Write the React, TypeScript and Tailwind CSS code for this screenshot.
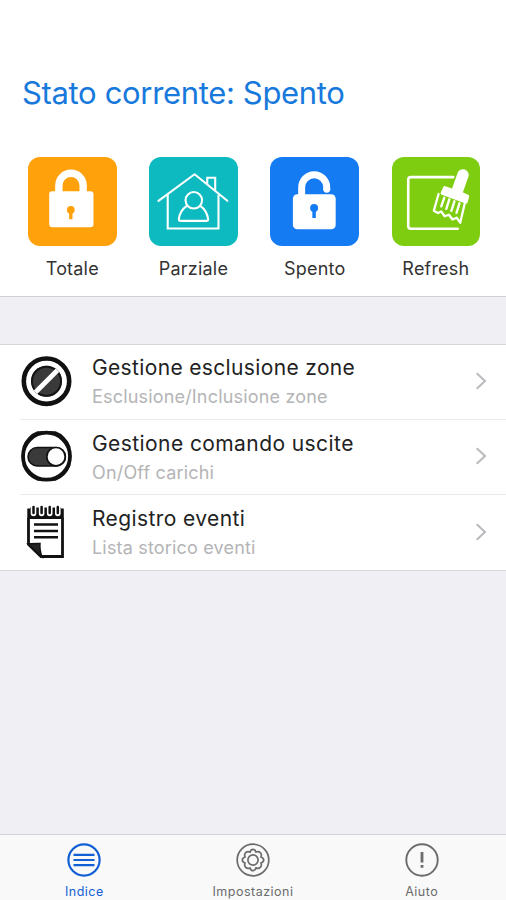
import { ReactNode } from "react";
import { clsx } from "clsx";

interface Action {
  label: string;
  color: string;
  icon: ReactNode;
}

interface Row {
  title: string;
  subtitle: string;
  titleClass: string;
  icon: ReactNode;
}

interface Tab {
  label: string;
  className: string;
  icon: ReactNode;
}

function LockIcon() {
  return (
    <svg viewBox="0 0 89 89" className="size-full" fill="none">
      <path d="M31 37V28.5a12.2 12.2 0 0 1 24.4 0V37" stroke="#fff" strokeWidth="7.4" />
      <rect x="21.3" y="34.5" width="44.5" height="36" rx="3" fill="#fff" />
      <circle cx="43" cy="53" r="3.9" fill="#ffa10a" />
      <path d="M43 54v8.5" stroke="#ffa10a" strokeWidth="3.4" />
    </svg>
  );
}

function HouseIcon() {
  return (
    <svg
      viewBox="0 0 89 89"
      className="size-full"
      fill="none"
      stroke="#fff"
      strokeWidth="2.1"
      strokeLinecap="round"
      strokeLinejoin="round"
    >
      <path d="M9.5 44 45.8 17.3 78.7 44" />
      <path d="M18.8 38.5v33.3h51V38.5" strokeLinejoin="miter" />
      <path d="M58.5 26.5v-5.7h8v12.7" strokeLinejoin="miter" />
      <circle cx="45" cy="43.5" r="8.3" />
      <path d="M38 49c-4.5 3-7.4 7.5-8 13.5q0 1.7 1.7 1.7h26q1.7 0 1.7-1.7c-.8-6-3.4-10.5-7.9-13.5" />
    </svg>
  );
}

function UnlockIcon() {
  return (
    <svg viewBox="0 0 89 89" className="size-full" fill="none">
      <path d="M31.800 40V30.500a12.600 12.600 0 0 1 25.200 0v2.400" stroke="#fff" strokeWidth="7" />
      <circle cx="57" cy="32.500" r="3.500" fill="#fff" />
      <rect x="23" y="37.300" width="43" height="35.400" rx="4.500" fill="#fff" />
      <circle cx="44.300" cy="51.300" r="4" fill="#147bf3" />
      <path d="M44.300 52v9.300" stroke="#147bf3" strokeWidth="3.500" />
    </svg>
  );
}

function BrushIcon() {
  return (
    <svg
      viewBox="0 0 89 89"
      className="size-full"
      fill="none"
      stroke="#fff"
      strokeLinecap="round"
      strokeLinejoin="round"
    >
      <path d="M61.5 20.2H19q-2.7 0-2.7 2.7v46.5q0 2.7 2.7 2.7H66" strokeWidth="2.6" />
      <path d="M71.3 18 66 33" strokeWidth="11.500" />
      <path d="M53 31 50.6 36.3 74.3 45 75.8 39.5 68 36z" fill="#fff" strokeWidth="3.5" />
      <path
        d="M46.800 37.200 42 54l4.200 2.300 3.200-1.600 3.500 4.800 4.300-1.500 3.600 4.800 4.200-1.800 3.500 5L73 47"
        strokeWidth="2.300"
      />
      <path d="m52.500 41-3 8.500M57.600 42.500l-3 9.500M62.700 44.500l-3 9.500M67.800 46.500l-3 9.500" strokeWidth="2.400" />
    </svg>
  );
}

function BanIcon() {
  return (
    <svg viewBox="0 0 52 52" className="size-[52px]">
      <circle cx="26.500" cy="25.200" r="22.700" fill="#fff" stroke="#111" strokeWidth="4.600" />
      <circle cx="26.500" cy="25.200" r="15.500" fill="#3a3a3a" />
      <circle cx="26.500" cy="25.200" r="14.500" fill="none" stroke="#151515" strokeWidth="2" />
      <path d="M37.500 14.200 15.500 36.200" stroke="#fff" strokeWidth="4.800" />
    </svg>
  );
}

function ToggleIcon() {
  return (
    <svg viewBox="0 0 52 52" className="size-[52px] overflow-visible">
      <path
        d="M18 2h17c6 2 11.500 8 13.700 14v18.500c-2.200 6-7.700 11.500-13.700 13.500H18c-6-2-11.500-7.500-13.700-13.500V16C6.500 10 12 4 18 2z"
        fill="#fff"
        stroke="#111"
        strokeWidth="3.500"
        strokeLinejoin="round"
      />
      <circle cx="26.500" cy="25.200" r="23.500" fill="#fff" stroke="#111" strokeWidth="3.800" />
      <rect x="8" y="16.500" width="37.500" height="18.500" rx="9.250" fill="#3a3a3a" stroke="#111" strokeWidth="1.500" />
      <circle cx="36" cy="25.700" r="9.200" fill="#fff" stroke="#111" strokeWidth="1.700" />
    </svg>
  );
}

function NotesIcon() {
  return (
    <svg viewBox="0 0 52 56" className="h-14 w-[52px]" fill="none" stroke="#111">
      <path d="M8.500 13v26.500L21 51.500h21.500V13" fill="#fff" strokeWidth="2.800" />
      <path d="M8 39c4-.3 8.500-.8 12-.5-.6 4.500.3 8.500 1.800 13z" fill="#222" strokeWidth="1.500" />
      <path d="M7.300 2.500h36.500v11.500H7.300z" fill="#111" stroke="none" />
      <path d="M8.500-2v5.500M42.600-2v5.500" stroke="#fff" strokeWidth="3" />
      <path
        d="M13.500-2v10.500M21.600-2v10.500M29.700-2v10.500M37.800-2v10.500"
        stroke="#fff"
        strokeWidth="5.600"
        strokeLinecap="round"
      />
      <path d="M13.500 2v6M21.600 2v6M29.700 2v6M37.800 2v6" strokeWidth="2.500" strokeLinecap="round" />
      <path d="M14 19.500h24M14 26h24M14 32.300h24" strokeWidth="2.400" />
    </svg>
  );
}

function ListIcon() {
  return (
    <svg viewBox="0 0 34 34" className="size-[34px]" fill="none" stroke="currentColor">
      <circle cx="17" cy="17" r="15.6" strokeWidth="2.200" />
      <path d="M6.5 11.8h21M6.5 17h21M6.5 22.2h21" strokeWidth="2.200" />
    </svg>
  );
}

function GearIcon() {
  return (
    <svg viewBox="0 0 34 34" className="size-[34px]" fill="none" stroke="currentColor" strokeWidth="1.7">
      <circle cx="17" cy="17" r="15.8" />
      <path
        d="M17 6.3q2.1 0 2.9 2.8 2.6-1.2 4.4.6t.6 4.3q2.8.9 2.8 3t-2.8 3q1.2 2.6-.6 4.3t-4.4.6q-.8 2.8-2.9 2.8t-2.9-2.8q-2.6 1.2-4.4-.6T9.1 20q-2.8-.9-2.8-3t2.8-3q-1.2-2.6.6-4.3t4.4-.6q.8-2.8 2.900-2.800z"
        strokeLinejoin="round"
      />
      <circle cx="17" cy="17" r="5.100" />
    </svg>
  );
}

function HelpIcon() {
  return (
    <svg viewBox="0 0 34 34" className="size-[34px]" fill="none" stroke="currentColor">
      <circle cx="17" cy="17" r="15.7" strokeWidth="1.9" />
      <path d="M17 9v10.5M17 22v2.8" strokeWidth="2.8" />
    </svg>
  );
}

function Chevron() {
  return (
    <svg viewBox="0 0 12 18" className="mr-[19px] mb-0.5 h-[18px] w-3" fill="none">
      <path d="M1.7 1.2 10 9l-8.3 7.8" stroke="#b9b9be" strokeWidth="2" />
    </svg>
  );
}

const actions: Action[] = [
  { label: "Totale", color: "bg-[#ffa10a]", icon: <LockIcon /> },
  { label: "Parziale", color: "bg-[#0dbabf]", icon: <HouseIcon /> },
  { label: "Spento", color: "bg-[#147bf3]", icon: <UnlockIcon /> },
  { label: "Refresh", color: "bg-[#7fcd10]", icon: <BrushIcon /> },
];

const rows: Row[] = [
  {
    title: "Gestione esclusione zone",
    subtitle: "Esclusione/Inclusione zone",
    titleClass: "tracking-[0.35px]",
    icon: <BanIcon />,
  },
  {
    title: "Gestione comando uscite",
    subtitle: "On/Off carichi",
    titleClass: "tracking-[0.42px]",
    icon: <ToggleIcon />,
  },
  {
    title: "Registro eventi",
    subtitle: "Lista storico eventi",
    titleClass: "tracking-[0.4px]",
    icon: <NotesIcon />,
  },
];

const tabs: Tab[] = [
  { label: "Indice", className: "text-[#1260d4]", icon: <ListIcon /> },
  { label: "Impostazioni", className: "text-[#6b6b6b]", icon: <GearIcon /> },
  { label: "Aiuto", className: "text-[#6b6b6b]", icon: <HelpIcon /> },
];

export default function App() {
  return (
    <div className="flex h-[900px] w-[506px] flex-col overflow-hidden bg-[#efeff4] font-['Inter',sans-serif]">
      {/* Status and quick actions */}
      <header className="h-[297px] shrink-0 border-b border-[#d0d0d4] bg-white pt-[73px]">
        <h1 className="pl-[22px] text-[31px] leading-10 font-normal tracking-[-0.34px] whitespace-nowrap text-[#1879dc]">
          Stato corrente: Spento
        </h1>
        <div className="mt-11 flex gap-[32.6px] pl-7">
          {actions.map((action) => (
            <div key={action.label} className="flex w-[88.6px] flex-col items-center">
              <div className={clsx("size-[88.6px] rounded-xl", action.color)}>{action.icon}</div>
              <span className="mt-[11px] text-[18px] leading-6 tracking-[0.2px] text-[#333]">{action.label}</span>
            </div>
          ))}
        </div>
      </header>

      {/* Menu */}
      <main className="mt-[47px] shrink-0 border-y border-[#d6d6da] bg-white">
        {rows.map((row, i) => (
          <div
            key={row.title}
            className={clsx(
              "ml-5 flex items-center",
              i < rows.length - 1 ? "h-[75px] border-b border-[#e9e9eb]" : "h-[75px]"
            )}
          >
            <div className="w-[72px]">{row.icon}</div>
            <div className={clsx("flex-1 whitespace-nowrap", i === 0 ? "pt-0" : "pt-0.5")}>
              <p className={clsx("text-[21px] leading-7 text-[#222]", row.titleClass)}>{row.title}</p>
              <p className="mt-px text-[18px] leading-7 tracking-[0.18px] text-[#b4b4b6]">{row.subtitle}</p>
            </div>
            <Chevron />
          </div>
        ))}
      </main>

      {/* Bottom tabs */}
      <nav className="mt-auto grid h-[66px] shrink-0 grid-cols-3 border-t border-[#d3d3d7] bg-[#f9f9fa]">
        {tabs.map((tab) => (
          <div key={tab.label} className={clsx("flex flex-col items-center pt-2", tab.className)}>
            {tab.icon}
            <span className="mt-[7px] text-[12.5px] leading-4 tracking-[0.5px]">{tab.label}</span>
          </div>
        ))}
      </nav>
    </div>
  );
}
